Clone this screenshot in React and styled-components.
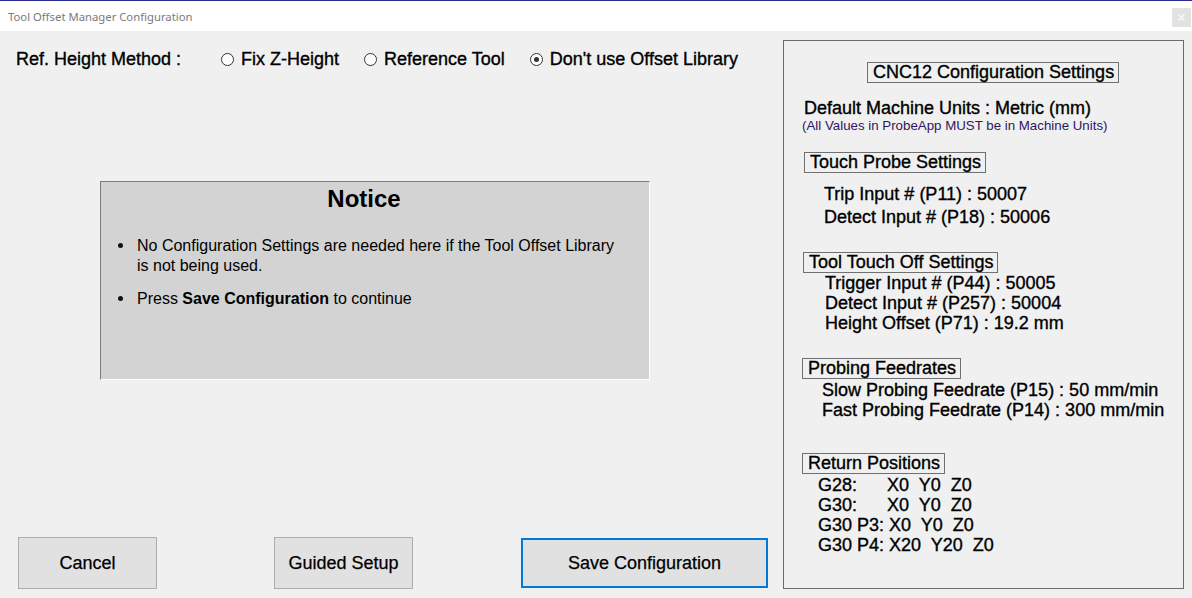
import React from 'react';
import styled, { createGlobalStyle } from 'styled-components';

const GlobalStyle = createGlobalStyle`
  html, body { margin: 0; padding: 0; }
  body {
    width: 1192px;
    height: 598px;
    overflow: hidden;
    background: #f0f0f0;
    font-family: "Liberation Sans", Arial, sans-serif;
    color: #000;
  }
  * { box-sizing: border-box; }
`;

const Window = styled.div`
  display: flex;
  flex-direction: column;
  width: 1192px;
  height: 598px;
  background: #f0f0f0;
`;

const TitleBar = styled.div`
  display: flex;
  justify-content: space-between;
  align-items: center;
  height: 31px;
  border-top: 1px solid #2b2b8e;
  background: #fff;
  padding: 0 1px 0 8px;
`;

const TitleText = styled.div`
  font-family: "Noto Sans", "Open Sans", sans-serif;
  font-size: 11.3px;
  color: #7a7a7a;
`;

const CloseButton = styled.div`
  align-self: flex-start;
  margin-top: 7px;
  width: 19px;
  height: 19px;
  background: #e2e2e2;
  display: flex;
  align-items: center;
  justify-content: center;
`;

const Body = styled.div`
  flex: 1;
  display: flex;
  padding: 9px 8px 9px 0;
`;

const LeftColumn = styled.div`
  width: 783px;
  flex-shrink: 0;
  display: flex;
  flex-direction: column;
  align-items: flex-start;
`;

const MethodRow = styled.div`
  display: flex;
  align-items: center;
  margin-top: 9px;
  height: 21px;
  padding-left: 16px;
  font-size: 18px;
  line-height: 21px;
  -webkit-text-stroke: 0.35px #000;
`;

const MethodLabel = styled.div`
  width: 205px;
`;

const RadioOption = styled.label`
  display: flex;
  align-items: center;
  margin-right: 25px;
`;

const RadioCircle = styled.span`
  width: 13px;
  height: 13px;
  border-radius: 50%;
  border: 1px solid #333;
  background: #fff;
  margin-right: 7px;
  display: flex;
  align-items: center;
  justify-content: center;
  -webkit-text-stroke: 0;
  &::after {
    content: "";
    width: 5px;
    height: 5px;
    border-radius: 50%;
    background: ${(p) => (p.$checked ? '#333' : 'transparent')};
  }
`;

const NoticeBox = styled.div`
  margin: 111px 0 0 100px;
  width: 550px;
  height: 199px;
  background: #d3d3d3;
  border-top: 1px solid #7c7c7c;
  border-left: 1px solid #7c7c7c;
  border-right: 1px solid #ffffff;
  border-bottom: 1px solid #ffffff;
  padding: 3px 25px 0 3px;
`;

const NoticeTitle = styled.div`
  text-align: center;
  font-weight: bold;
  font-size: 24px;
  line-height: 28px;
`;

const NoticeList = styled.div`
  margin-top: 23px;
  font-size: 16px;
  line-height: 20px;
`;

const NoticeItem = styled.div`
  display: flex;
  align-items: flex-start;
  margin-top: ${(p) => p.$gap || 0}px;
`;

const Dot = styled.span`
  flex-shrink: 0;
  width: 5px;
  height: 5px;
  border-radius: 50%;
  background: #111;
  margin: 7px 14px 0 14px;
`;

const ButtonRow = styled.div`
  display: flex;
  align-items: center;
  margin-top: 157px;
  height: 52px;
  padding-left: 18px;
`;

const Button = styled.button`
  margin-left: ${(p) => p.$ml || 0}px;
  width: ${(p) => (p.$primary ? 247 : 139)}px;
  height: ${(p) => (p.$primary ? 50 : 52)}px;
  background: #e1e1e1;
  border: ${(p) => (p.$primary ? '2px solid #0078d7' : '1px solid #adadad')};
  font-family: "Liberation Sans", Arial, sans-serif;
  font-size: 18px;
  color: #000;
  -webkit-text-stroke: 0.25px #000;
  padding: 0;
`;

const SettingsPanel = styled.div`
  width: 401px;
  border: 1px solid #6b6b6b;
  font-size: 18px;
  -webkit-text-stroke: 0.35px #000;
`;

const SectionBox = styled.div`
  width: fit-content;
  margin-left: ${(p) => p.$x}px;
  margin-top: ${(p) => p.$y}px;
  border: 1px solid #707070;
  padding: 0 4px 0 5px;
  line-height: 19px;
`;

const InfoLine = styled.div`
  margin-left: ${(p) => p.$x}px;
  margin-top: ${(p) => p.$y || 0}px;
  line-height: 20px;
  white-space: pre;
`;

const NoteLine = styled.div`
  margin-left: 18px;
  font-size: 13.3px;
  line-height: 16px;
  color: #2e1660;
  -webkit-text-stroke: 0;
`;

function Radio({ label, checked }) {
  return (
    <RadioOption>
      <RadioCircle $checked={checked} />
      {label}
    </RadioOption>
  );
}

export default function App() {
  return (
    <>
      <GlobalStyle />
      <Window>
        <TitleBar>
          <TitleText>Tool Offset Manager Configuration</TitleText>
          <CloseButton>
            <svg width="7" height="7" viewBox="0 0 7 7">
              <path d="M0.5 0.5 L6.5 6.5 M6.5 0.5 L0.5 6.5" stroke="#fafafa" strokeWidth="1.4" />
            </svg>
          </CloseButton>
        </TitleBar>
        <Body>
          <LeftColumn>
            <MethodRow>
              <MethodLabel>Ref. Height Method :</MethodLabel>
              <Radio label="Fix Z-Height" />
              <Radio label="Reference Tool" />
              <Radio label="Don't use Offset Library" checked />
            </MethodRow>
            <NoticeBox>
              <NoticeTitle>Notice</NoticeTitle>
              <NoticeList>
                <NoticeItem>
                  <Dot />
                  <span>
                    No Configuration Settings are needed here if the Tool Offset Library
                    <br />
                    is not being used.
                  </span>
                </NoticeItem>
                <NoticeItem $gap={13}>
                  <Dot />
                  <span>
                    Press <b>Save Configuration</b> to continue
                  </span>
                </NoticeItem>
              </NoticeList>
            </NoticeBox>
            <ButtonRow>
              <Button>Cancel</Button>
              <Button $ml={117}>Guided Setup</Button>
              <Button $ml={108} $primary>Save Configuration</Button>
            </ButtonRow>
          </LeftColumn>
          <SettingsPanel>
            <SectionBox $x={83} $y={21}>CNC12 Configuration Settings</SectionBox>
            <InfoLine $x={20} $y={15}>Default Machine Units : Metric (mm)</InfoLine>
            <NoteLine>(All Values in ProbeApp MUST be in Machine Units)</NoteLine>

            <SectionBox $x={20} $y={18}>Touch Probe Settings</SectionBox>
            <InfoLine $x={40} $y={11}>Trip Input # (P11) : 50007</InfoLine>
            <InfoLine $x={40} $y={3}>Detect Input # (P18) : 50006</InfoLine>

            <SectionBox $x={19} $y={25}>Tool Touch Off Settings</SectionBox>
            <InfoLine $x={41}>Trigger Input # (P44) : 50005</InfoLine>
            <InfoLine $x={41}>Detect Input # (P257) : 50004</InfoLine>
            <InfoLine $x={41}>Height Offset (P71) : 19.2 mm</InfoLine>

            <SectionBox $x={18} $y={25}>Probing Feedrates</SectionBox>
            <InfoLine $x={38} $y={1}>Slow Probing Feedrate (P15) : 50 mm/min</InfoLine>
            <InfoLine $x={38}>Fast Probing Feedrate (P14) : 300 mm/min</InfoLine>

            <SectionBox $x={18} $y={33}>Return Positions</SectionBox>
            <InfoLine $x={34} $y={1}>{'G28:      X0  Y0  Z0'}</InfoLine>
            <InfoLine $x={34}>{'G30:      X0  Y0  Z0'}</InfoLine>
            <InfoLine $x={34}>{'G30 P3: X0  Y0  Z0'}</InfoLine>
            <InfoLine $x={34}>{'G30 P4: X20  Y20  Z0'}</InfoLine>
          </SettingsPanel>
        </Body>
      </Window>
    </>
  );
}
